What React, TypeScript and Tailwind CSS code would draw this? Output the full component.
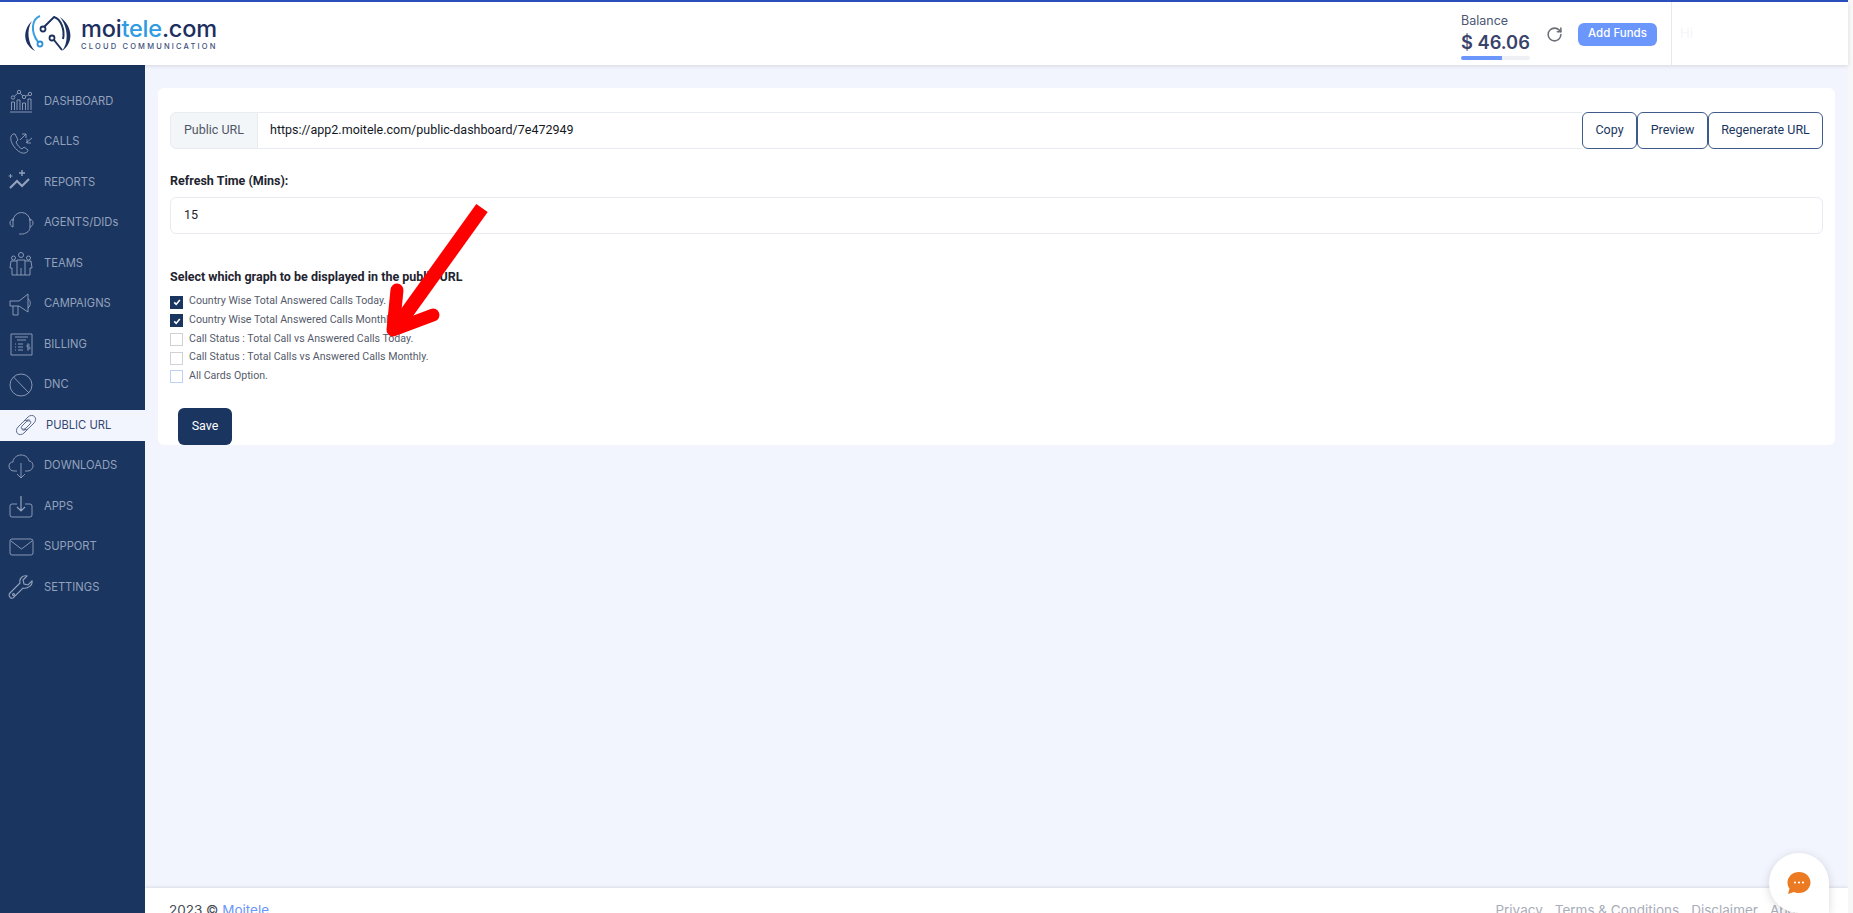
import { ReactNode } from "react";
import { RotateCw } from "lucide-react";

const icon = "w-[26px] h-[26px] fill-none stroke-current";

const DashboardIcon = () => (
  <svg viewBox="0 0 26 26" className={icon} strokeWidth={0.9}>
    <path d="M2 24h22M3.5 22v-8h3v8M9 22V12h3v10M14.5 22v-7h3v7M20 22V11h3v11" />
    <circle cx="5" cy="9.5" r="1.7" />
    <circle cx="11" cy="4" r="1.7" />
    <circle cx="16" cy="9" r="1.7" />
    <circle cx="22" cy="6" r="1.7" />
    <path d="M6.3 8.3 9.8 5.2M12.3 5.2l2.5 2.7M17.5 8.2 20.5 6.8" />
  </svg>
);
const CallsIcon = () => (
  <svg viewBox="0 0 26 26" className={icon} strokeWidth={0.9}>
    <path d="M5 5c-3 2-3 6 0 11s8 9 12 8c2-.4 3-2 3-3l-4-3-2 2c-2-1-5-4-6-7l2-2-3-6z" />
    <path d="M12 11l6-6M14 5h4v4M24 9l-6 5M19 10v4h4" />
  </svg>
);
const ReportsIcon = () => (
  <svg viewBox="0 0 26 26" className={icon} strokeWidth={2.2}>
    <path d="M2 19l7-7 5 5 7-7" />
    <path d="M14 1v6M11 4h6" strokeWidth={1.4} />
    <path d="M2.500 5v4M.5 7h4" strokeWidth={0.9} />
  </svg>
);
const AgentsIcon = () => (
  <svg viewBox="0 0 26 26" className={icon} strokeWidth={0.9}>
    <path d="M5 11a8.500 8.500 0 0 1 17 0" />
    <path d="M5 9c-2 1-3 2-3 4s1 3 3 4zM22 9c2 1 3 2 3 4s-1 3-3 4z" />
    <path d="M22 17c0 4-3 6-7 7h-4" />
  </svg>
);
const TeamsIcon = () => (
  <svg viewBox="0 0 26 26" className={icon} strokeWidth={0.9}>
    <circle cx="13" cy="5" r="2.500" />
    <circle cx="5.500" cy="8" r="2" />
    <circle cx="20.500" cy="8" r="2" />
    <path d="M9 10h8v15H9zM13 18v7" />
    <path d="M9 11H3l-1 7h2v7h5M17 11h6l1 7h-2v7h-5" />
  </svg>
);
const CampaignsIcon = () => (
  <svg viewBox="0 0 26 26" className={icon} strokeWidth={0.9}>
    <path d="M2 10h9l9-7v18l-9-6H2zM20 8c3 1 3 7 0 9M5 15v9h5v-9" />
  </svg>
);
const BillingIcon = () => (
  <svg viewBox="0 0 26 26" className={icon} strokeWidth={0.9}>
    <path d="M3 3h21v21H3zM7 6h13M9 9h9M7 13h1M10 13h5M7 16h1M10 16h5M7 19h1M10 19h5" />
    <path d="M20 12v8M22 14h-3v2h3v2h-3" strokeWidth={0.7} />
  </svg>
);
const DncIcon = () => (
  <svg viewBox="0 0 26 26" className={icon} strokeWidth={0.9}>
    <circle cx="13" cy="13" r="11" />
    <path d="M5.500 5 21 21" />
  </svg>
);
const LinkIcon = () => (
  <svg viewBox="0 0 26 26" className={icon} strokeWidth={1}>
    <path d="M11 9l4-4c2-2 5-2 6.500-.5S23 9 21 11l-5 5c-2 2-4 2-5 1" />
    <path d="M13.500 8.500c1-1 2.500-1 3.500 0s1 2.500 0 3.500l-4 4c-1.500 1.500-3 1.500-4 .5" />
    <path d="M15 17l-4 4c-2 2-5 2-6.500.5S3 17 5 15l5-5c2-2 4-2 5-1" />
    <path d="M12.500 17.500c-1 1-2.500 1-3.500 0s-1-2.500 0-3.500l4-4c1.500-1.500 3-1.500 4-.5" />
  </svg>
);
const DownloadsIcon = () => (
  <svg viewBox="0 0 26 26" className={icon} strokeWidth={0.9}>
    <path d="M9 18H6c-3 0-5-2-5-5s2-4 4-4c0-4 4-7 8-7s7 2 8 6c3 0 4 3 4 5s-2 5-5 5h-3" />
    <path d="M13 10v15M9 21l4 4 4-4" />
  </svg>
);
const AppsIcon = () => (
  <svg viewBox="0 0 26 26" className={icon} strokeWidth={0.9}>
    <path d="M9 11H4a2 2 0 0 0-2 2v9a2 2 0 0 0 2 2h18a2 2 0 0 0 2-2v-9a2 2 0 0 0-2-2h-5" />
    <path d="M13 3v15M9 14l4 4 4-4" strokeWidth={1.2} />
  </svg>
);
const SupportIcon = () => (
  <svg viewBox="0 0 26 26" className={icon} strokeWidth={0.9}>
    <rect x="2" y="5" width="23" height="16" rx="2" />
    <path d="M3 7l10.500 8L24 7" />
  </svg>
);
const SettingsIcon = () => (
  <svg viewBox="0 0 26 26" className={icon} strokeWidth={1.1}>
    <path d="M24 7l-4 4-4-1-1-4 4-4c-4-1-8 2-7 7L2 19c-2 2 0 6 3 5l10-10c5 1 10-3 9-7z" />
    <circle cx="5.500" cy="20.500" r="1" />
  </svg>
);

const Logo = () => (
  <svg viewBox="24 15 52 39" className="w-[52px] h-[39px] fill-none shrink-0">
    <path d="M35 22C27 29 24 44 38 52 31 45 29 31 35 22z" fill="#1d3160" />
    <path d="M63 18c13 9 14 26 2 34 7-9 6-24-2-34z" fill="#1d3160" />
    <path d="M43 17c-8 3-10 15-2 26" stroke="#3a9fe0" strokeWidth={2} />
    <path d="M47 28l10-10c7 2 11 13 9 22" stroke="#1d3160" strokeWidth={2} />
    <path d="M57 41l8 10" stroke="#1d3160" strokeWidth={2} />
    <circle cx="46" cy="30" r="2.500" stroke="#1d3160" strokeWidth={1.800} />
    <circle cx="55" cy="39" r="2.500" stroke="#1d3160" strokeWidth={1.800} />
    <circle cx="43" cy="45" r="2.500" stroke="#2e8fd6" strokeWidth={1.800} />
  </svg>
);

const navItems: { label: string; icon: ReactNode; active?: boolean }[] = [
  { label: "DASHBOARD", icon: <DashboardIcon /> },
  { label: "CALLS", icon: <CallsIcon /> },
  { label: "REPORTS", icon: <ReportsIcon /> },
  { label: "AGENTS/DIDs", icon: <AgentsIcon /> },
  { label: "TEAMS", icon: <TeamsIcon /> },
  { label: "CAMPAIGNS", icon: <CampaignsIcon /> },
  { label: "BILLING", icon: <BillingIcon /> },
  { label: "DNC", icon: <DncIcon /> },
  { label: "PUBLIC URL", icon: <LinkIcon />, active: true },
  { label: "DOWNLOADS", icon: <DownloadsIcon /> },
  { label: "APPS", icon: <AppsIcon /> },
  { label: "SUPPORT", icon: <SupportIcon /> },
  { label: "SETTINGS", icon: <SettingsIcon /> },
];

const checks = [
  { label: "Country Wise Total Answered Calls Today.", on: true },
  { label: "Country Wise Total Answered Calls Monthly.", on: true },
  { label: "Call Status : Total Call vs Answered Calls Today.", on: false },
  { label: "Call Status : Total Calls vs Answered Calls Monthly.", on: false },
  { label: "All Cards Option.", on: false, blue: true },
];

function Header() {
  return (
    <header className="h-[63px] shrink-0 flex items-center bg-white shadow-[0_1px_4px_rgba(0,0,0,0.12)] relative z-10 font-['Inter',sans-serif]">
      <div className="flex items-center ml-[21px] gap-[8px]">
        <Logo />
        <div className="flex flex-col">
          <div className="text-[23.500px] leading-[27px] font-medium text-[#1d2f5f] tracking-[-0.2px]">
            moi<span className="text-[#2f9be0]">tele</span>.com
          </div>
          <div className="text-[7.500px] leading-[10px] tracking-[2.200px] font-medium text-[#3c4f7c] whitespace-nowrap">CLOUD COMMUNICATION</div>
        </div>
      </div>
      <div className="ml-auto flex flex-col w-[69px] pt-[6px]">
        <div className="text-[12.500px] leading-[16px] text-[#4b5573]">Balance</div>
        <div className="text-[18.300px] leading-[26px] font-semibold text-[#39436b] whitespace-nowrap">$ 46.06</div>
        <div className="h-[4px] mt-[1px] rounded-full bg-[#eef0f5] overflow-hidden">
          <div className="h-full w-[60%] bg-[#6b96fb]" />
        </div>
      </div>
      <RotateCw className="w-[17px] h-[17px] ml-[16px] mt-[1px] text-[#6b6f76]" strokeWidth={2.2} />
      <button className="ml-[15px] mt-[1px] w-[79px] h-[23px] rounded-md bg-[#6b96fb] text-white text-[11.500px] font-medium">Add Funds</button>
      <div className="ml-[14px] w-[177px] h-[63px] border-l border-[#e4e8ef] pl-[8px] flex items-center text-[13px] text-[#f4f5f8]">Hi</div>
    </header>
  );
}

function Sidebar() {
  return (
    <nav className="w-[145px] shrink-0 bg-[#1a355f] pt-[16px] font-['Inter',sans-serif]">
      {navItems.map((item) =>
        item.active ? (
          <div key={item.label} className="h-[31px] my-[4.750px] bg-[#f2f5fe] flex items-center pl-[13px] gap-[7px] text-[#34466f] text-[11.200px]">
            <span className="text-[#5b6b8c]">{item.icon}</span>
            {item.label}
          </div>
        ) : (
          <div key={item.label} className="h-[40.500px] flex items-center pl-[8px] gap-[10px] text-[#93a2bd] text-[11.200px]">
            {item.icon}
            {item.label}
          </div>
        )
      )}
    </nav>
  );
}

function Card() {
  return (
    <section className="mx-[13px] mt-[23px] h-[357px] bg-white rounded-md px-[12px] pt-[24px] font-['Roboto',sans-serif]">
      <div className="flex h-[37px]">
        <div className="w-[88px] flex items-center justify-center bg-[#f3f6f9] border border-[#e8ecf1] rounded-l-md text-[12.500px] text-[#4f5666]">Public URL</div>
        <div className="flex-1 flex items-center pl-[12px] border-y border-[#e8ecf1] text-[12.500px] text-[#14181f]">https://app2.moitele.com/public-dashboard/7e472949</div>
        <button className="w-[55px] border border-[#3f5b8c] rounded-md text-[12.500px] text-[#1a355f]">Copy</button>
        <button className="w-[71px] border border-[#3f5b8c] rounded-md text-[12.500px] text-[#1a355f]">Preview</button>
        <button className="w-[115px] border border-[#3f5b8c] rounded-md text-[12.500px] text-[#1a355f]">Regenerate URL</button>
      </div>
      <div className="mt-[24px] text-[12.500px] leading-[16px] font-bold text-[#1f2430]">Refresh Time (Mins):</div>
      <div className="mt-[8px] h-[37px] flex items-center pl-[13px] border border-[#e8ecf1] rounded-md text-[12.500px] text-[#1f2430]">15</div>
      <div className="mt-[35px] text-[12.500px] leading-[16px] font-bold text-[#1f2430]">Select which graph to be displayed in the public URL</div>
      <div className="mt-[7px] flex flex-col">
        {checks.map((c) => (
          <div key={c.label} className="h-[18.600px] flex items-center gap-[6px] text-[10.600px] text-[#555b6b]">
            <span
              className={
                c.on
                  ? "w-[13px] h-[13px] mt-[2px] bg-[#1a355f] flex items-center justify-center"
                  : c.blue
                    ? "w-[13px] h-[13px] mt-[2px] border border-[#bcd0f8]"
                    : "w-[13px] h-[13px] mt-[2px] border border-[#cfd0d8]"
              }
            >
              {c.on && (
                <svg viewBox="0 0 10 10" className="w-[8px] h-[8px] fill-none stroke-white" strokeWidth={2}>
                  <path d="M1.500 5.500 4 8l4.500-5.500" />
                </svg>
              )}
            </span>
            {c.label}
          </div>
        ))}
      </div>
      <button className="mt-[23px] ml-[8px] w-[54px] h-[37px] rounded-md bg-[#1a355f] text-white text-[12.500px]">Save</button>
    </section>
  );
}

function Footer() {
  return (
    <footer className="mt-auto h-[25px] shrink-0 overflow-hidden bg-white shadow-[0_-1px_3px_rgba(0,0,0,0.1)] flex pt-[12px] pl-[24px] pr-[40px] text-[13.500px] font-['Inter',sans-serif]">
      <div className="text-[#444a55]">
        2023 © <span className="text-[#6b96fb]">Moitele</span>
      </div>
      <div className="ml-auto flex gap-[12px] text-[#a8adb9] whitespace-nowrap">
        <span>Privacy</span>
        <span>Terms &amp; Conditions</span>
        <span>Disclaimer</span>
        <span>About</span>
      </div>
    </footer>
  );
}

export default function App() {
  return (
    <div className="relative h-[913px] overflow-hidden bg-[#f7f7f8] pr-[5px]">
      <div className="h-[2px] bg-[#2c50c0]" />
      <div className="flex flex-col h-[911px]">
        <Header />
        <div className="flex flex-1 min-h-0">
          <Sidebar />
          <main className="flex-1 min-w-0 flex flex-col bg-[#f2f5fe] overflow-hidden">
            <Card />
            <Footer />
          </main>
        </div>
      </div>
      {/* red annotation arrow drawn on top of the screenshot */}
      <svg className="absolute left-[380px] top-[195px] w-[120px] h-[150px] fill-none stroke-[#ff0000]" viewBox="0 0 120 150">
        <path d="M102 13 18 130" strokeWidth={14} />
        <path d="M17 95 13 135 53 120" strokeWidth={13} strokeLinecap="round" strokeLinejoin="round" />
      </svg>
      <div className="absolute left-[1769px] top-[853px] w-[60px] h-[60px] bg-white rounded-t-full rounded-bl-full rounded-br-[8px] shadow-[0_2px_10px_rgba(0,0,0,0.15)] flex items-center justify-center">
        <svg viewBox="0 0 24 24" className="w-[24px] h-[24px]">
          <path d="M12 1c6.500 0 11.500 4.700 11.500 10.500S18.500 22 12 22c-2 0-3.500-.3-5-1l-6 2 1.500-5.500C1.300 16 .5 14 .5 11.500.5 5.700 5.500 1 12 1z" fill="#ec7a22" />
          <circle cx="8" cy="11.500" r="1.100" fill="#fff" />
          <circle cx="12" cy="11.500" r="1.100" fill="#fff" />
          <circle cx="16" cy="11.500" r="1.100" fill="#fff" />
        </svg>
      </div>
    </div>
  );
}
